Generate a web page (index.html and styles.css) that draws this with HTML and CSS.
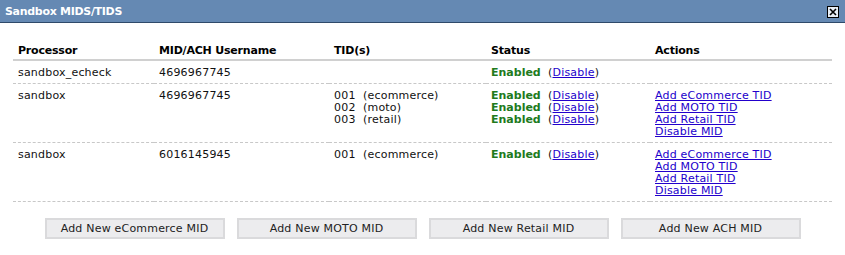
FILE: index.html
```html
<!DOCTYPE html>
<html lang="en">
<head>
    <meta charset="UTF-8">
    <title>Sandbox MIDS/TIDS</title>
    <link rel="stylesheet" href="styles.css">
</head>
<body>
    <div class="titlebar">
        <span class="title">Sandbox MIDS/TIDS</span>
        <span class="close">
            <svg width="12" height="12" viewBox="0 0 12 12">
                <rect x="0.5" y="0.5" width="11" height="11" fill="#e8eef6" stroke="#000"/>
                <path d="M3 3 L9 9 M9 3 L3 9" stroke="#000" stroke-width="1.6"/>
            </svg>
        </span>
    </div>

    <div class="content">
        <table class="mids">
            <tr>
                <th class="c1">Processor</th>
                <th class="c2">MID/ACH Username</th>
                <th class="c3">TID(s)</th>
                <th class="c4">Status</th>
                <th class="c5">Actions</th>
            </tr>
            <tr>
                <td>sandbox_echeck</td>
                <td>4696967745</td>
                <td></td>
                <td><span class="enabled">Enabled</span>(<a href="#">Disable</a>)</td>
                <td></td>
            </tr>
            <tr>
                <td>sandbox</td>
                <td>4696967745</td>
                <td class="tids">001  (ecommerce)<br>002  (moto)<br>003  (retail)</td>
                <td>
                    <span class="enabled">Enabled</span>(<a href="#">Disable</a>)<br>
                    <span class="enabled">Enabled</span>(<a href="#">Disable</a>)<br>
                    <span class="enabled">Enabled</span>(<a href="#">Disable</a>)
                </td>
                <td>
                    <a href="#">Add eCommerce TID</a><br>
                    <a href="#">Add MOTO TID</a><br>
                    <a href="#">Add Retail TID</a><br>
                    <a href="#">Disable MID</a>
                </td>
            </tr>
            <tr>
                <td>sandbox</td>
                <td>6016145945</td>
                <td class="tids">001  (ecommerce)</td>
                <td><span class="enabled">Enabled</span>(<a href="#">Disable</a>)</td>
                <td>
                    <a href="#">Add eCommerce TID</a><br>
                    <a href="#">Add MOTO TID</a><br>
                    <a href="#">Add Retail TID</a><br>
                    <a href="#">Disable MID</a>
                </td>
            </tr>
        </table>

        <div class="buttons">
            <button class="btn">Add New eCommerce MID</button>
            <button class="btn">Add New MOTO MID</button>
            <button class="btn">Add New Retail MID</button>
            <button class="btn">Add New ACH MID</button>
        </div>
    </div>
</body>
</html>
```

FILE: styles.css
```css
html, body {
    margin: 0;
    padding: 0;
    background: #fff;
    font-family: "DejaVu Sans", Verdana, sans-serif;
    font-size: 11px;
    color: #111;
}
.titlebar {
    display: flex;
    align-items: center;
    justify-content: space-between;
    height: 22px;
    padding: 0 6px 0 5px;
    background-color: #6589b3;
    border-bottom: 1px solid #2f4a6a;
}
.title {
    color: #fff;
    font-weight: bold;
    font-size: 11px;
    letter-spacing: -0.3px;
}
.close {
    display: flex;
    margin-top: 1px;
}
.close svg {
    display: block;
}
.content {
    padding: 18px 13px 0 13px;
}
.mids {
    width: 819px;
    border-collapse: collapse;
    table-layout: fixed;
    letter-spacing: 0.2px;
}
.mids th {
    text-align: left;
    font-weight: bold;
    color: #000;
    letter-spacing: -0.2px;
    padding: 4px 5px 2px 5px;
    line-height: 12px;
    border-bottom: 2px solid #d0d0d0;
}
.mids td {
    vertical-align: top;
    padding: 6px 5px 4px 5px;
    line-height: 12px;
    border-bottom: 1px dashed #c8c8c8;
}
.c1 { width: 131px; }
.c2 { width: 165px; }
.c3 { width: 147px; }
.c4 { width: 154px; }
.c5 { width: 172px; }
.tids {
    white-space: pre;
}
.enabled {
    display: inline-block;
    width: 57px;
    color: #217a1c;
    font-weight: bold;
    letter-spacing: 0;
}
a {
    color: #2200cc;
    text-decoration: underline;
}
.buttons {
    display: flex;
    justify-content: center;
    gap: 12px;
    margin-top: 16px;
    margin-left: -13px;
    margin-right: -13px;
}
.btn {
    width: 180px;
    height: 21px;
    padding: 0;
    font-family: "DejaVu Sans", Verdana, sans-serif;
    font-size: 11px;
    letter-spacing: 0.2px;
    color: #222;
    background-color: #ececee;
    border: 2px solid #dadadc;
}
```
